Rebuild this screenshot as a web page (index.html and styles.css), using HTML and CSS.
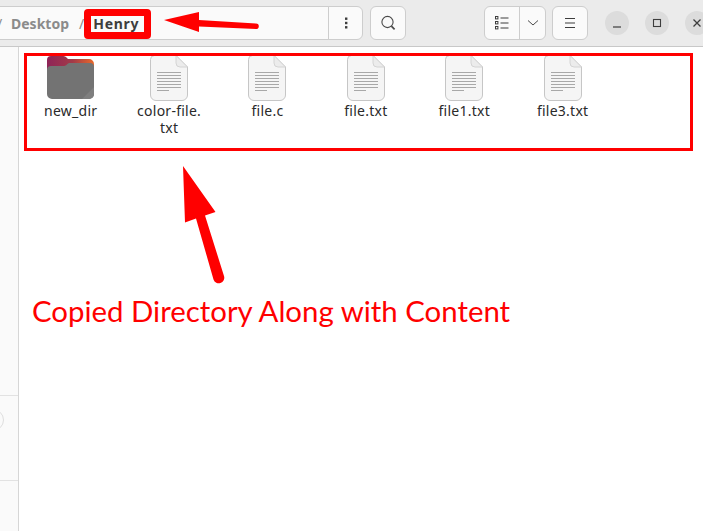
FILE: index.html
```html
<!DOCTYPE html>
<html lang="en">
<head>
<meta charset="utf-8">
<title>Henry</title>
<link rel="stylesheet" href="styles.css">
</head>
<body>
<div class="app">
  <header class="header">
    <div class="pathbar">
      <span class="crumb-sep clip">/</span>
      <span class="crumb">Desktop</span>
      <span class="crumb-sep">/</span>
      <span class="crumb current">Henry</span>
    </div>
    <button class="btn btn-joined"><svg width="16" height="16" viewBox="0 0 16 16"><g fill="#3d3d3d"><rect x="7" y="2.5" width="2.4" height="2.4"/><rect x="7" y="6.8" width="2.4" height="2.4"/><rect x="7" y="11.1" width="2.4" height="2.4"/></g></svg></button>
    <button class="btn btn-search"><svg width="18" height="18" viewBox="0 0 18 18" fill="none" stroke="#4a4a4a"><circle cx="8.5" cy="8" r="5.6" stroke-width="1.1"/><path d="M12.4 12.2L15.6 15.4" stroke-width="1.7"/></svg></button>
    <div class="view-group">
      <button class="view-list"><svg width="14" height="14" viewBox="0 0 14 14" fill="none" stroke="#3d3d3d"><path d="M5.5 2h8M5.5 7h8M5.5 12h8" stroke-width="1"/><rect x=".5" y=".5" width="2.4" height="2.4"/><rect x=".5" y="5.5" width="2.4" height="2.4"/><rect x=".5" y="10.5" width="2.4" height="2.4"/></svg></button>
      <button class="view-more"><svg width="12" height="8" viewBox="0 0 12 8" fill="none" stroke="#4a4a4a" stroke-width="1"><path d="M1 1.5l5 4.5 5-4.5"/></svg></button>
    </div>
    <button class="btn btn-menu"><svg width="12" height="12" viewBox="0 0 12 12" fill="none" stroke="#3d3d3d" stroke-width="1"><path d="M1 1.5h10M1 6h10M1 10.500h10"/></svg></button>
    <div class="win-controls">
      <button class="win"><svg width="10" height="10" viewBox="0 0 10 10"><path d="M1 9h8" stroke="#3d3d3d" stroke-width="1.2"/></svg></button>
      <button class="win"><svg width="10" height="10" viewBox="0 0 10 10"><rect x="1.500" y="1.500" width="7" height="7" fill="none" stroke="#3d3d3d" stroke-width="1.100"/></svg></button>
      <button class="win"><svg width="10" height="10" viewBox="0 0 10 10"><path d="M1.500 1.500l7 7M8.500 1.500l-7 7" stroke="#3d3d3d" stroke-width="1.300"/></svg></button>
    </div>
  </header>
  <div class="body">
    <aside class="sidebar">
      <div class="side-spacer"></div>
      <div class="side-disk"><span class="disk-ring"></span></div>
      <div class="side-foot"></div>
    </aside>
    <main class="files">
      <div class="file">
        <svg class="icon" width="47" height="46" viewBox="0 0 47 46">
          <defs>
            <linearGradient id="fg" x1="0" y1="0" x2="1" y2="0"><stop offset="0" stop-color="#8e2458"/><stop offset=".55" stop-color="#a33a48"/><stop offset="1" stop-color="#e8692a"/></linearGradient>
          </defs>
          <path d="M0 5a4 4 0 0 1 4-4h12a4 4 0 0 1 3.500 1.500L21 4h21a5 5 0 0 1 5 5v12H0z" fill="url(#fg)"/>
          <path d="M0 15a4 4 0 0 1 4-4h13a3 3 0 0 0 2-.8L21 8.500a2 2 0 0 1 1.500-.5H43a4 4 0 0 1 4 4v27a5 5 0 0 1-5 5H5a5 5 0 0 1-5-5z" fill="#737373"/>
          <path d="M35 44l12-12v7a5 5 0 0 1-5 5z" fill="#7f7f7f"/>
        </svg>
        <span class="name">new_dir</span>
      </div>
      <div class="file">
        <svg class="icon" width="38" height="46" viewBox="0 0 38 46"><use href="#doc"/></svg>
        <span class="name">color-file.<br>txt</span>
      </div>
      <div class="file">
        <svg class="icon" width="38" height="46" viewBox="0 0 38 46"><use href="#doc"/></svg>
        <span class="name">file.c</span>
      </div>
      <div class="file">
        <svg class="icon" width="38" height="46" viewBox="0 0 38 46"><use href="#doc"/></svg>
        <span class="name">file.txt</span>
      </div>
      <div class="file">
        <svg class="icon" width="38" height="46" viewBox="0 0 38 46"><use href="#doc"/></svg>
        <span class="name">file1.txt</span>
      </div>
      <div class="file">
        <svg class="icon" width="38" height="46" viewBox="0 0 38 46"><use href="#doc"/></svg>
        <span class="name">file3.txt</span>
      </div>
    </main>
  </div>
  <div class="mark-henry"></div>
  <div class="mark-files"></div>
  <svg class="arrows" width="703" height="531" viewBox="0 0 703 531">
    <path d="M164 20L199 12V20L256 23.500a2.800 2.800 0 0 1 0 5.600L199 26.500V32z" fill="#f00"/>
    <path d="M183 166L215.500 212 205 215.500 224 276a5.500 5.500 0 0 1-10.500 3.500L196 218.500 185 222.500z" fill="#f00"/>
  </svg>
  <p class="caption">Copied Directory Along with Content</p>
</div>
<svg class="defs" width="0" height="0">
  <defs>
    <g id="doc">
      <path d="M4.500.5H26L37.500 12v28a5.500 5.500 0 0 1-5.500 5.500H6A5.500 5.500 0 0 1 .5 40V4.500a4 4 0 0 1 4-4z" fill="#f5f5f5" stroke="#c6c6c6"/>
      <path d="M26 .5V8a4 4 0 0 0 4 4h7.500z" fill="#ececec" stroke="#d4d4d4"/>
      <path d="M7 17.500h24M7 20.500h24M7 23.500h24M7 26.500h24M7 29.500h24M7 32.500h24M7 35.500h12" stroke="#a8a8a8" fill="none"/>
    </g>
  </defs>
</svg>
</body>
</html>
```
FILE: styles.css
```css
* { box-sizing: border-box; }
html, body { margin: 0; padding: 0; background: #fff; }
button { font: inherit; padding: 0; cursor: default; }
.app {
  position: relative;
  width: 703px;
  height: 531px;
  overflow: hidden;
  display: flex;
  flex-direction: column;
  font-family: "Noto Sans", "Open Sans", sans-serif;
}
.header {
  flex: none;
  height: 47px;
  display: flex;
  align-items: flex-start;
  padding-top: 6px;
  background: #ebebeb;
  border-bottom: 1px solid #c8c8c8;
}
.pathbar {
  width: 329px;
  height: 34px;
  flex: none;
  display: flex;
  align-items: center;
  background: #fafafa;
  border: 1px solid #cdcdcd;
  border-left: 0;
  font-size: 14px;
  font-weight: 700;
  color: #8b8b8b;
}
.crumb-sep { font-weight: 400; }
.crumb-sep.clip { margin-left: -3px; margin-right: 9px; width: 5px; }
.crumb { margin-right: 10px; }
.current { color: #3d3d3d; margin-left: 9px; letter-spacing: .7px; }
.btn, .view-group {
  height: 34px;
  background: #fafafa;
  border: 1px solid #cdcdcd;
  display: flex;
  align-items: center;
  justify-content: center;
}
.btn-joined { width: 35px; margin-left: -1px; border-radius: 0 6px 6px 0; flex: none; }
.btn-search { width: 36px; margin-left: 7px; border-radius: 6px; flex: none; }
.view-group { margin-left: 78px; width: 62px; border-radius: 6px; overflow: hidden; flex: none; }
.view-list, .view-more {
  height: 100%;
  background: transparent;
  border: 0;
  display: flex;
  align-items: center;
  justify-content: center;
}
.view-list { width: 35px; border-right: 1px solid #cdcdcd; }
.view-more { width: 25px; }
.btn-menu { width: 36px; margin-left: 6px; border-radius: 6px; flex: none; }
.win-controls { display: flex; gap: 16px; margin-left: 17px; margin-top: 5px; flex: none; }
.win {
  width: 24px;
  height: 24px;
  border: 0;
  border-radius: 50%;
  background: #dcdcdc;
  display: flex;
  align-items: center;
  justify-content: center;
  flex: none;
}
.body { flex: 1; display: flex; min-height: 0; }
.sidebar {
  flex: none;
  width: 19px;
  background: #fafafa;
  border-right: 1px solid #d6d6d6;
  display: flex;
  flex-direction: column;
}
.side-spacer { height: 349px; flex: none; border-bottom: 1px solid #e2e2e2; }
.side-disk { height: 85px; flex: none; border-bottom: 1px solid #e2e2e2; position: relative; overflow: hidden; }
.disk-ring {
  position: absolute;
  left: -18px;
  top: 13px;
  width: 22px;
  height: 22px;
  border: 1px solid #dedede;
  border-radius: 50%;
}
.side-foot { flex: 1; }
.files {
  flex: 1;
  display: grid;
  grid-template-columns: repeat(6, 98.4px);
  align-content: start;
  padding: 8px 0 0 2.5px;
}
.file {
  display: flex;
  flex-direction: column;
  align-items: center;
  text-align: center;
}
.icon { display: block; height: 46px; }
.name {
  margin-top: 1px;
  font-size: 14px;
  letter-spacing: .25px;
  line-height: 17px;
  color: #2a2a2a;
}
.mark-henry {
  position: absolute;
  left: 84px;
  top: 9px;
  width: 67px;
  height: 30px;
  border: 7px solid #f00;
  border-radius: 4px;
}
.mark-files {
  position: absolute;
  left: 24px;
  top: 53px;
  width: 669px;
  height: 98px;
  border: 3px solid #f00;
}
.arrows { position: absolute; left: 0; top: 0; pointer-events: none; }
.caption {
  position: absolute;
  left: 32px;
  top: 292px;
  margin: 0;
  font-family: Lato, "Open Sans", sans-serif;
  font-size: 29.4px;
  line-height: 38px;
  color: #f00;
  white-space: nowrap;
}
.defs { position: absolute; }
```
